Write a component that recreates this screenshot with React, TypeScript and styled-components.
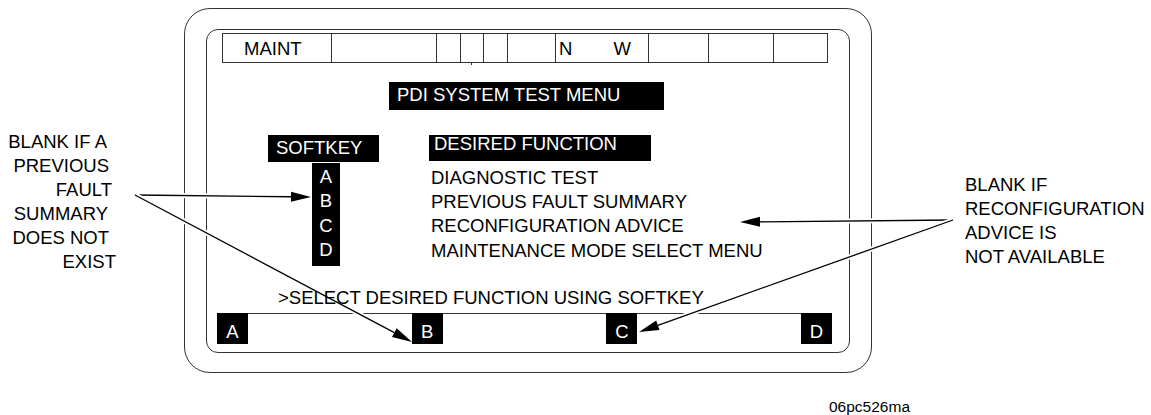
import React from 'react';
import styled, { createGlobalStyle } from 'styled-components';

const INK = '#000';
const RULE = '#333';

const GlobalStyle = createGlobalStyle`
  html, body {
    margin: 0;
    padding: 0;
    background: #fff;
  }
  body {
    font-family: 'Liberation Sans', Arial, Helvetica, sans-serif;
    color: ${INK};
  }
`;

type Halo = [number, number];

interface ArrowProps {
  x1: number;
  y1: number;
  x2: number;
  y2: number;
  halos: Halo[];
}

// arrow with a white halo so it cuts through the frame lines like the print
const Arrow: React.FC<ArrowProps> = ({ x1, y1, x2, y2, halos }) => {
  const dx = x2 - x1;
  const dy = y2 - y1;
  const len = Math.hypot(dx, dy);
  const ux = dx / len;
  const uy = dy / len;
  const head = 20;
  const half = 5;
  const bx = x2 - ux * head;
  const by = y2 - uy * head;
  const pts = `${x2},${y2} ${bx - uy * half},${by + ux * half} ${bx + uy * half},${by - ux * half}`;
  return (
    <g>
      {halos.map(([a, b], i) => (
        <line
          key={i}
          x1={x1 + dx * a}
          y1={y1 + dy * a}
          x2={x1 + dx * b}
          y2={y1 + dy * b}
          stroke="#fff"
          strokeWidth={5}
        />
      ))}
      <line x1={x1} y1={y1} x2={bx} y2={by} stroke={INK} strokeWidth={1.3} />
      <polygon points={pts} fill={INK} />
    </g>
  );
};

const statusCols = [108, 105, 24, 23, 24, 48, 93, 60, 65, 54];

const leftNote = [
  { text: 'BLANK IF A', inset: 9 },
  { text: 'PREVIOUS', inset: 7 },
  { text: 'FAULT', inset: 4 },
  { text: 'SUMMARY', inset: 8 },
  { text: 'DOES NOT', inset: 7 },
  { text: 'EXIST', inset: 0 },
];

const rightNote = ['BLANK IF', 'RECONFIGURATION', 'ADVICE IS', 'NOT AVAILABLE'];

const options = [
  'DIAGNOSTIC TEST',
  'PREVIOUS FAULT SUMMARY',
  'RECONFIGURATION ADVICE',
  'MAINTENANCE MODE SELECT MENU',
];

const keys = ['A', 'B', 'C', 'D'];

export default function App() {
  return (
    <>
      <GlobalStyle />
      <Page>
        <Row>
          <Callout $top={122} $width={116} $align="right">
            {leftNote.map((l) => (
              <CalloutLine key={l.text} $inset={l.inset}>
                {l.text}
              </CalloutLine>
            ))}
          </Callout>

          <Bezel>
            <Screen>
              <StatusBar>
                {statusCols.map((_, i) => (
                  <StatusCell key={i} $first={i === 0} $tick={i === 3}>
                    {i === 0 && <StatusText $pad={21}>MAINT</StatusText>}
                    {i === 6 && (
                      <>
                        <StatusText $pad={3}>N</StatusText>
                        <StatusText $pad={41}>W</StatusText>
                      </>
                    )}
                  </StatusCell>
                ))}
              </StatusBar>

              <InverseLabel $left={182.5} $top={19} $w={275} $h={28} $lh={25.4}>
                PDI SYSTEM TEST MENU
              </InverseLabel>

              <HeaderRow>
                <InverseLabel $left={61.5} $w={111} $h={27} $lh={26.4}>
                  SOFTKEY
                </InverseLabel>
                <InverseLabel $left={50} $w={222} $h={26} $lh={18.4} $pad={5}>
                  DESIRED FUNCTION
                </InverseLabel>
              </HeaderRow>

              <MenuBody>
                <KeyColumn>
                  {keys.map((k) => (
                    <KeyLetter key={k}>{k}</KeyLetter>
                  ))}
                </KeyColumn>
                <OptionList>
                  {options.map((o) => (
                    <Option key={o}>{o}</Option>
                  ))}
                </OptionList>
              </MenuBody>

              <Prompt>&gt;SELECT DESIRED FUNCTION USING SOFTKEY</Prompt>

              <SoftkeyBar>
                {keys.map((k) => (
                  <SoftkeyCap key={k}>{k}</SoftkeyCap>
                ))}
              </SoftkeyBar>
            </Screen>
          </Bezel>

          <Callout $top={165} $left={93} $align="left">
            {rightNote.map((l) => (
              <CalloutLine key={l} $inset={0}>
                {l}
              </CalloutLine>
            ))}
          </Callout>
        </Row>

        <FigureId>06pc526ma</FigureId>

        <ArrowLayer width="1151" height="415" viewBox="0 0 1151 415">
          <Arrow x1={135} y1={195} x2={311} y2={197} halos={[[0, 0.85]]} />
          <Arrow x1={135} y1={195} x2={412} y2={342} halos={[[0, 0.61], [0.77, 0.92]]} />
          <Arrow x1={953} y1={220} x2={740} y2={222} halos={[[0, 0.88]]} />
          <Arrow x1={953} y1={220} x2={639} y2={332} halos={[[0, 0.92]]} />
        </ArrowLayer>
      </Page>
    </>
  );
}

const Page = styled.div`
  position: relative;
  width: 1151px;
  height: 415px;
  padding-top: 8px;
  box-sizing: border-box;
  overflow: hidden;
  background: #fff;
`;

const Row = styled.div`
  display: flex;
  align-items: flex-start;
`;

const Callout = styled.div<{ $top: number; $width?: number; $left?: number; $align: 'left' | 'right' }>`
  margin-top: ${(p) => p.$top}px;
  margin-left: ${(p) => p.$left ?? 0}px;
  width: ${(p) => (p.$width ? `${p.$width}px` : 'auto')};
  text-align: ${(p) => p.$align};
  font-size: 18.5px;
  line-height: 24.1px;
  white-space: nowrap;
`;

const CalloutLine = styled.div<{ $inset: number }>`
  padding-right: ${(p) => p.$inset}px;
`;

const Bezel = styled.div`
  margin-left: 68px;
  width: 688px;
  height: 365px;
  box-sizing: border-box;
  border: 1.5px solid ${RULE};
  border-radius: 26px;
  padding: 19.5px 21.5px 19.5px 20.5px;
  display: flex;
`;

const Screen = styled.div`
  flex: 1;
  border: 1.5px solid ${RULE};
  border-radius: 12px;
  display: flex;
  flex-direction: column;
  align-items: flex-start;
  font-size: 18.5px;
  white-space: nowrap;
`;

const StatusBar = styled.div`
  margin: 3.5px 0 0 15.5px;
  height: 30px;
  box-sizing: border-box;
  border: 1px solid ${RULE};
  display: grid;
  grid-template-columns: ${statusCols.map((c) => `${c}px`).join(' ')};
`;

const StatusCell = styled.div<{ $first: boolean; $tick: boolean }>`
  position: relative;
  display: flex;
  align-items: center;
  border-left: ${(p) => (p.$first ? 'none' : `1px solid ${RULE}`)};
  line-height: 1;

  &::after {
    content: '';
    display: ${(p) => (p.$tick ? 'block' : 'none')};
    position: absolute;
    left: 10px;
    bottom: -3px;
    width: 1px;
    height: 3px;
    background: ${RULE};
  }
`;

const StatusText = styled.span<{ $pad: number }>`
  margin-left: ${(p) => p.$pad}px;
  margin-top: 2px;
`;

const InverseLabel = styled.div<{
  $left: number;
  $top?: number;
  $w: number;
  $h: number;
  $lh: number;
  $pad?: number;
}>`
  margin-left: ${(p) => p.$left}px;
  margin-top: ${(p) => p.$top ?? 0}px;
  width: ${(p) => p.$w}px;
  height: ${(p) => p.$h}px;
  box-sizing: border-box;
  padding-left: ${(p) => p.$pad ?? 8}px;
  background: ${INK};
  color: #fff;
  line-height: ${(p) => p.$lh}px;
`;

const HeaderRow = styled.div`
  margin-top: 25px;
  display: flex;
  align-items: flex-start;
`;

const MenuBody = styled.div`
  margin-top: 1px;
  display: flex;
  align-items: flex-start;
  height: 103px;
`;

const KeyColumn = styled.div`
  margin-left: 105.5px;
  width: 28px;
  height: 103px;
  box-sizing: border-box;
  padding-top: 1.5px;
  background: ${INK};
  color: #fff;
  text-align: center;
`;

const KeyLetter = styled.div`
  line-height: 24.6px;
`;

const OptionList = styled.div`
  margin-left: 91px;
  padding-top: 2.5px;
`;

const Option = styled.div`
  line-height: 24.4px;
`;

const Prompt = styled.div`
  margin: 20px 0 0 71.5px;
  line-height: 24.5px;
`;

const SoftkeyBar = styled.div`
  margin: 2.5px 0 0 10.5px;
  width: 615px;
  border-top: 1px solid ${RULE};
  display: flex;
  justify-content: space-between;
`;

const SoftkeyCap = styled.div`
  margin-top: -1px;
  width: 31px;
  height: 31px;
  box-sizing: border-box;
  padding-top: 6px;
  background: ${INK};
  color: #fff;
  text-align: center;
  line-height: 25px;
`;

const FigureId = styled.div`
  margin: 25px 0 0 829px;
  font-size: 15.5px;
  line-height: 18px;
`;

const ArrowLayer = styled.svg`
  position: absolute;
  top: 0;
  left: 0;
  pointer-events: none;
`;
